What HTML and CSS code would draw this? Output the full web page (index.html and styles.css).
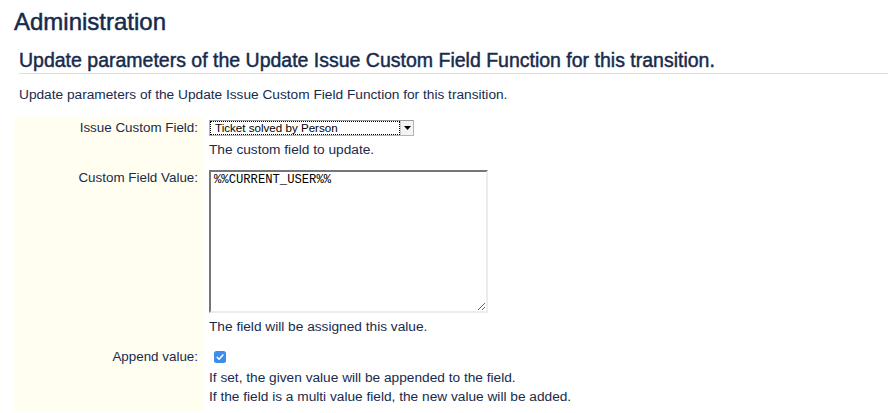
FILE: index.html
```html
<!DOCTYPE html>
<html lang="en">
<head>
<meta charset="utf-8">
<title>Administration</title>
<link rel="stylesheet" href="styles.css">
</head>
<body>
<header class="page-header">
  <h1 class="page-title">Administration</h1>
</header>
<section class="panel">
  <h2 class="panel-title">Update parameters of the Update Issue Custom Field Function for this transition.</h2>
  <p class="panel-desc">Update parameters of the Update Issue Custom Field Function for this transition.</p>
  <div class="form">
    <div class="form-label">Issue Custom Field:</div>
    <div class="form-field">
      <div class="select">
        <span class="select-value">Ticket solved by Person</span>
        <span class="select-arrow">
          <svg width="7" height="4" viewBox="0 0 7 4"><path d="M0 0h7L3.5 4z" fill="#000"/></svg>
        </span>
      </div>
      <div class="hint">The custom field to update.</div>
    </div>

    <div class="form-label form-label--area">Custom Field Value:</div>
    <div class="form-field">
      <textarea class="textarea">%%CURRENT_USER%%</textarea>
      <div class="hint">The field will be assigned this value.</div>
    </div>

    <div class="form-label form-label--check">Append value:</div>
    <div class="form-field form-field--check">
      <div class="check-line">
        <span class="checkbox">
          <svg width="12" height="12" viewBox="0 0 12 12"><rect width="12" height="12" rx="2.5" fill="#3b8ef0"/><path d="M3.2 6.3l1.9 1.9 3.8-4.3" fill="none" stroke="#fff" stroke-width="1.5" stroke-linecap="round" stroke-linejoin="round"/></svg>
        </span>
      </div>
      <div class="hint hint--tight">If set, the given value will be appended to the field.</div>
      <div class="hint hint--tight">If the field is a multi value field, the new value will be added.</div>
    </div>
  </div>
</section>
</body>
</html>
```
FILE: styles.css
```css
html, body {
  margin: 0;
  padding: 0;
  background: #fff;
}
body {
  font-family: "Liberation Sans", Arial, sans-serif;
  color: #172b4d;
  overflow: hidden;
}
.page-header {
  padding: 8px 14px 0;
}
.page-title {
  margin: 0;
  font-size: 24px;
  line-height: 28px;
  font-weight: normal;
  color: #172b4d;
  -webkit-text-stroke: 0.5px #172b4d;
}
.panel {
  padding: 0 0 0 14px;
}
.panel-title {
  margin: 13px 0 0 5px;
  font-size: 19.5px;
  line-height: 23px;
  font-weight: normal;
  -webkit-text-stroke: 0.45px #172b4d;
  padding-bottom: 1px;
  border-bottom: 1px solid #dddddd;
}
.panel-desc {
  margin: 12px 0 0 5px;
  font-size: 13.7px;
  line-height: 18px;
}
.form {
  margin-top: 13px;
  display: grid;
  grid-template-columns: 190px 1fr;
  font-size: 13.7px;
  line-height: 20px;
}
.form-label {
  background: #fffef0;
  text-align: right;
  padding: 1px 6px 5px 0;
  font-size: 13.4px;
}
.form-label--area {
  padding-top: 3px;
}
.form-label--check {
  padding-top: 5px;
}
.form-field {
  padding: 1px 0 5px 5px;
}
.form-field--check {
  padding-top: 5px;
}
.select {
  display: flex;
  width: 205px;
  height: 16px;
  box-sizing: border-box;
  margin-top: 2px;
  margin-bottom: 4px;
  border: 1px solid #b5b5b5;
  border-top-color: #9a9a9a;
  background: #fff;
  font-size: 11.6px;
  line-height: 12px;
  color: #000;
}
.select-value {
  flex: 1;
  border: 1px dotted #000;
  padding: 0 4px;
}
.select-arrow {
  width: 12px;
  display: flex;
  align-items: center;
  justify-content: center;
  border-left: 1px solid #c8c8c8;
  background: #f4f4f4;
}
.hint {
  color: #172b4d;
}
.hint--tight {
  line-height: 19px;
}
.textarea {
  display: block;
  width: 279px;
  height: 143px;
  box-sizing: border-box;
  margin: 4px 0 4px;
  padding: 1px 3px;
  border-style: solid;
  border-width: 2px;
  border-color: #767676 #ececec #ececec #767676;
  font-family: "Liberation Mono", "Courier New", monospace;
  font-size: 12.2px;
  line-height: 14px;
  color: #000;
  resize: both;
  background: #fff;
}
.check-line {
  height: 20px;
  margin-bottom: 1px;
  display: flex;
  align-items: center;
}
.checkbox {
  display: flex;
  margin-left: 5px;
}
```
